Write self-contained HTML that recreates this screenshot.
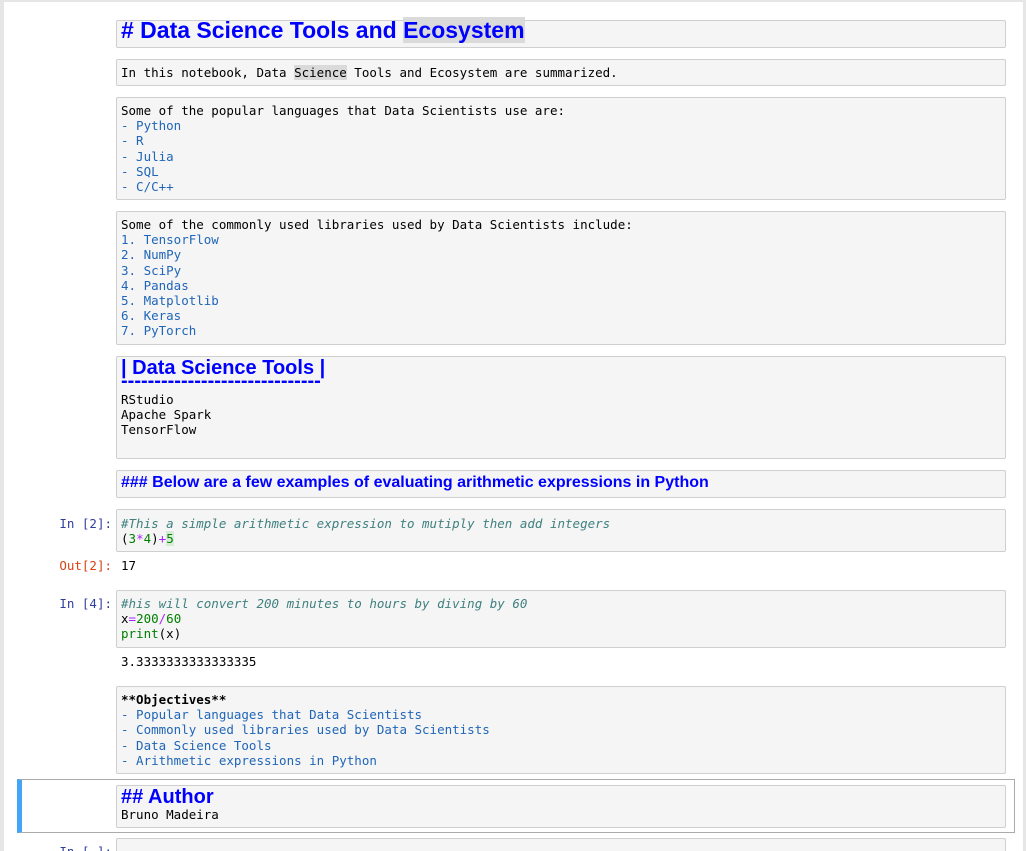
<!DOCTYPE html>
<html style="height:851px;overflow:hidden"><head><style>
body{margin:0;background:#e6e6e6;width:1026px;height:851px;overflow:hidden;position:relative;font-family:"DejaVu Sans Mono","Liberation Mono",monospace;font-size:12.5px;}
.nb{position:absolute;left:4px;top:2px;width:1019px;height:849px;background:#fff;}
.b{position:absolute;left:116px;width:884px;background:#f5f5f5;border:1px solid #cfcfcf;border-radius:2px;padding:0 0 0 4px;line-height:15.2px;color:#000;white-space:pre;}
.h{font-family:"Liberation Sans",Arial,sans-serif;font-weight:bold;color:#0000ff;}
.l{color:#2066b8;}
.p{position:absolute;left:0;width:112px;text-align:right;line-height:15px;}
.in{color:#303f9f;}
.out{color:#d84315;}
.c{color:#408080;font-style:italic;}
.n{color:#008000;}
.o{color:#aa22ff;}
.t{position:absolute;left:121px;line-height:15px;white-space:pre;}
</style></head><body>
<div class="nb"></div>
<div class="b" style="top:20px;height:26px;"><span class="h" style="font-size:23px;line-height:24px;position:relative;top:-3px;"># Data Science Tools and <span style="background:#dadada">Ecosystem</span></span></div>
<div class="b" style="top:59px;height:25px;padding-top:0"><div style="margin-top:5px">In this notebook, Data <span style="background:#dadada">Science</span> Tools and Ecosystem are summarized.</div></div>
<div class="b" style="top:97px;height:101px;"><div style="margin-top:5px">Some of the popular languages that Data Scientists use are:
<span class="l">- Python
- R
- Julia
- SQL
- C/C++</span></div></div>
<div class="b" style="top:211px;height:132px;"><div style="margin-top:5px">Some of the commonly used libraries used by Data Scientists include:
<span class="l">1. TensorFlow
2. NumPy
3. SciPy
4. Pandas
5. Matplotlib
6. Keras
7. PyTorch</span></div></div>
<div class="b" style="top:356px;height:101px;"><div class="h" style="font-size:20px;line-height:22px;margin-top:0">| Data Science Tools |</div><div class="h" style="font-size:20px;line-height:10px;height:10px;margin-top:-3px;overflow:visible">------------------------------</div><div style="margin-top:6px">RStudio
Apache Spark
TensorFlow</div></div>
<div class="b" style="top:470px;height:26px;"><div class="h" style="font-size:16px;line-height:18px;margin-top:3px">### Below are a few examples of evaluating arithmetic expressions in Python</div></div>
<div class="p in" style="top:516px">In [2]:</div>
<div class="b" style="top:509px;height:41px;"><div style="margin-top:6px"><span class="c">#This a simple arithmetic expression to mutiply then add integers</span>
(<span class="n">3</span><span class="o">*</span><span class="n">4</span>)<span class="o">+</span><span class="n" style="background:#d6ecd6">5</span></div></div>
<div class="p out" style="top:558px">Out[2]:</div>
<div class="t" style="top:558px">17</div>
<div class="p in" style="top:596px">In [4]:</div>
<div class="b" style="top:590px;height:56px;"><div style="margin-top:5px"><span class="c">#his will convert 200 minutes to hours by diving by 60</span>
x<span class="o">=</span><span class="n">200</span><span class="o">/</span><span class="n">60</span>
<span class="n">print</span>(x)</div></div>
<div class="t" style="top:654px">3.3333333333333335</div>
<div class="b" style="top:686px;height:86px;"><div style="margin-top:5px"><b>**Objectives**</b>
<span class="l">- Popular languages that Data Scientists
- Commonly used libraries used by Data Scientists
- Data Science Tools
- Arithmetic expressions in Python</span></div></div>
<div style="position:absolute;left:17px;top:779px;width:992px;height:52px;border:1px solid #ababab;border-left:5px solid #42a5f5;"></div>
<div class="b" style="top:785px;height:41px;"><div class="h" style="font-size:20px;line-height:22px;margin-top:0">## Author</div><div style="margin-top:-1px">Bruno Madeira</div></div>
<div class="p in" style="top:844px">In [ ]:</div>
<div class="b" style="top:838px;height:30px;"></div>
</body></html>
